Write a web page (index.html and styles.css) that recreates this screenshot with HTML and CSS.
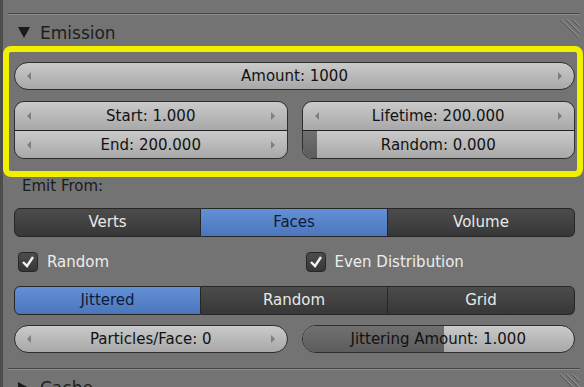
FILE: index.html
```html
<!DOCTYPE html>
<html lang="en">
<head>
	<meta charset="utf-8" />
	<title>Emission</title>
	<link rel="stylesheet" href="styles.css">
</head>
<body>

	<div class="panel">
		<div class="sep"></div>
		<div class="head">
			<i class="tri down"></i><span class="title">Emission</span>
			<svg class="grip" width="25" height="20" viewBox="0 0 25 20">
				<path d="M6 0 L25 19 M12 0 L25 13 M18 0 L25 7" stroke="#8e8e8e" stroke-width="1" fill="none" />
				<path d="M5 1 L24 20 M11 1 L24 14 M17 1 L24 8" stroke="#5a5a5a" stroke-width="1" fill="none" />
			</svg>
		</div>

		<!-- highlighted block -->
		<div class="mark">
			<div class="field pill"><i class="al"></i><span>Amount: 1000</span><i class="ar"></i></div>
			<div class="cols">
				<div class="stack">
					<div class="field"><i class="al"></i><span>Start: 1.000</span><i class="ar"></i></div>
					<div class="field"><i class="al"></i><span>End: 200.000</span><i class="ar"></i></div>
				</div>
				<div class="stack">
					<div class="field"><i class="al"></i><span>Lifetime: 200.000</span><i class="ar"></i></div>
					<div class="field"><b class="fill" style="width: 14px"></b><span>Random: 0.000</span></div>
				</div>
			</div>
		</div>

		<div class="label">Emit From:</div>
		<div class="seg">
			<div>Verts</div>
			<div class="on">Faces</div>
			<div>Volume</div>
		</div>

		<div class="cols checks">
			<label><span class="box"><svg width="14" height="14" viewBox="0 0 14 14"><path d="M2 7 L6 11 L12 2" stroke="#f2f2f2" stroke-width="2.4" fill="none" /></svg></span>Random</label>
			<label><span class="box"><svg width="14" height="14" viewBox="0 0 14 14"><path d="M2 7 L6 11 L12 2" stroke="#f2f2f2" stroke-width="2.4" fill="none" /></svg></span>Even Distribution</label>
		</div>

		<div class="seg">
			<div class="on">Jittered</div>
			<div>Random</div>
			<div>Grid</div>
		</div>

		<div class="cols low">
			<div class="field pill"><i class="al"></i><span>Particles/Face: 0</span><i class="ar"></i></div>
			<div class="field pill"><b class="fill" style="width: 52%"></b><span>Jittering Amount: 1.000</span></div>
		</div>

		<div class="sep"></div>
		<div class="head">
			<i class="tri right"></i><span class="title">Cache</span>
			<svg class="grip" width="25" height="20" viewBox="0 0 25 20">
				<path d="M6 0 L25 19 M12 0 L25 13 M18 0 L25 7" stroke="#8e8e8e" stroke-width="1" fill="none" />
				<path d="M5 1 L24 20 M11 1 L24 14 M17 1 L24 8" stroke="#5a5a5a" stroke-width="1" fill="none" />
			</svg>
		</div>
	</div>

</body>
</html>
```

FILE: styles.css
```css
* {
	box-sizing: border-box;
}

body {
	margin: 0;
	height: 387px;
	overflow: hidden;
	background: #737373;
	font-family: 'DejaVu Sans', sans-serif;
	font-size: 15px;
}

.panel {
	border-left: 3px solid #4d4d4d;
	padding: 13px 9px 0 11px;
	min-height: 387px;
}

/*Panel header*/
.sep {
	margin: 0 -5px 0 -6px;
	border-top: 1px solid #454545;
	border-bottom: 1px solid #8c8c8c;
}
.head {
	height: 31px;
	padding-top: 4px;
	display: flex;
	align-items: center;
}
.tri {
	width: 0;
	height: 0;
	margin-left: 4px;
	margin-right: 10px;
}
.tri.down {
	border-left: 6px solid transparent;
	border-right: 6px solid transparent;
	border-top: 11px solid #1b1b1b;
}
.tri.right {
	border-top: 6px solid transparent;
	border-bottom: 6px solid transparent;
	border-left: 11px solid #1b1b1b;
	margin-right: 11px;
}
.title {
	font-size: 17px;
	color: #1d1d1d;
}
.grip {
	margin-left: auto;
	margin-right: -5px;
	align-self: flex-start;
}

/*Yellow highlight*/
.mark {
	margin: 0 -8px 0 -11px;
	border: 6px solid #f0f000;
	border-radius: 8px;
	padding: 10px 2px 12px 5px;
}

/*Number fields*/
.field {
	position: relative;
	height: 28px;
	display: flex;
	align-items: center;
	padding: 0 12px;
	background: linear-gradient(#cacaca, #a8a8a8);
	border: 1px solid #2e2e2e;
	color: #121212;
	overflow: hidden;
}
.field span {
	position: relative;
	flex: 1;
	text-align: center;
}
.pill {
	border-radius: 14px;
}
.al, .ar {
	position: relative;
	width: 0;
	height: 0;
	border-top: 4px solid transparent;
	border-bottom: 4px solid transparent;
}
.al {
	border-right: 4px solid #7e7e7e;
}
.ar {
	border-left: 4px solid #7e7e7e;
}
.fill {
	position: absolute;
	left: 0;
	top: 0;
	bottom: 0;
	background: linear-gradient(#707070, #5c5c5c);
}

.cols {
	display: grid;
	grid-template-columns: 1fr 1fr;
	gap: 14px;
	margin-top: 11px;
}
.stack {
	border: 1px solid #2e2e2e;
	border-radius: 10px;
	overflow: hidden;
}
.stack .field {
	border: none;
}
.stack .field + .field {
	border-top: 1px solid #222;
}

.label {
	height: 18px;
	line-height: 18px;
	padding-left: 8px;
	color: #1b1b1b;
}

/*Segmented buttons*/
.seg {
	display: grid;
	grid-template-columns: repeat(3, 1fr);
	margin-top: 13px;
	height: 29px;
}
.seg div {
	background: linear-gradient(#4c4c4c, #373737);
	border: 1px solid #262626;
	border-left: none;
	color: #e8e8e8;
	text-align: center;
	line-height: 27px;
}
.seg div:first-child {
	border-left: 1px solid #262626;
	border-radius: 6px 0 0 6px;
}
.seg div:last-child {
	border-radius: 0 6px 6px 0;
}
.seg div.on {
	background: linear-gradient(#6290d6, #4c76bb);
	color: #0f1c38;
}

/*Checkboxes*/
.checks {
	height: 26px;
	margin-top: 12px;
}
.checks label {
	display: flex;
	align-items: center;
	padding-left: 4px;
	color: #ececec;
}
.box {
	width: 20px;
	height: 20px;
	margin-right: 9px;
	border: 1px solid #262626;
	border-radius: 4px;
	background: linear-gradient(#4c4c4c, #363636);
	display: flex;
	align-items: center;
	justify-content: center;
}

.checks + .seg {
	margin-top: 11px;
}
.low {
	margin-top: 10px;
}
.low + .sep {
	margin-top: 15px;
}
```
